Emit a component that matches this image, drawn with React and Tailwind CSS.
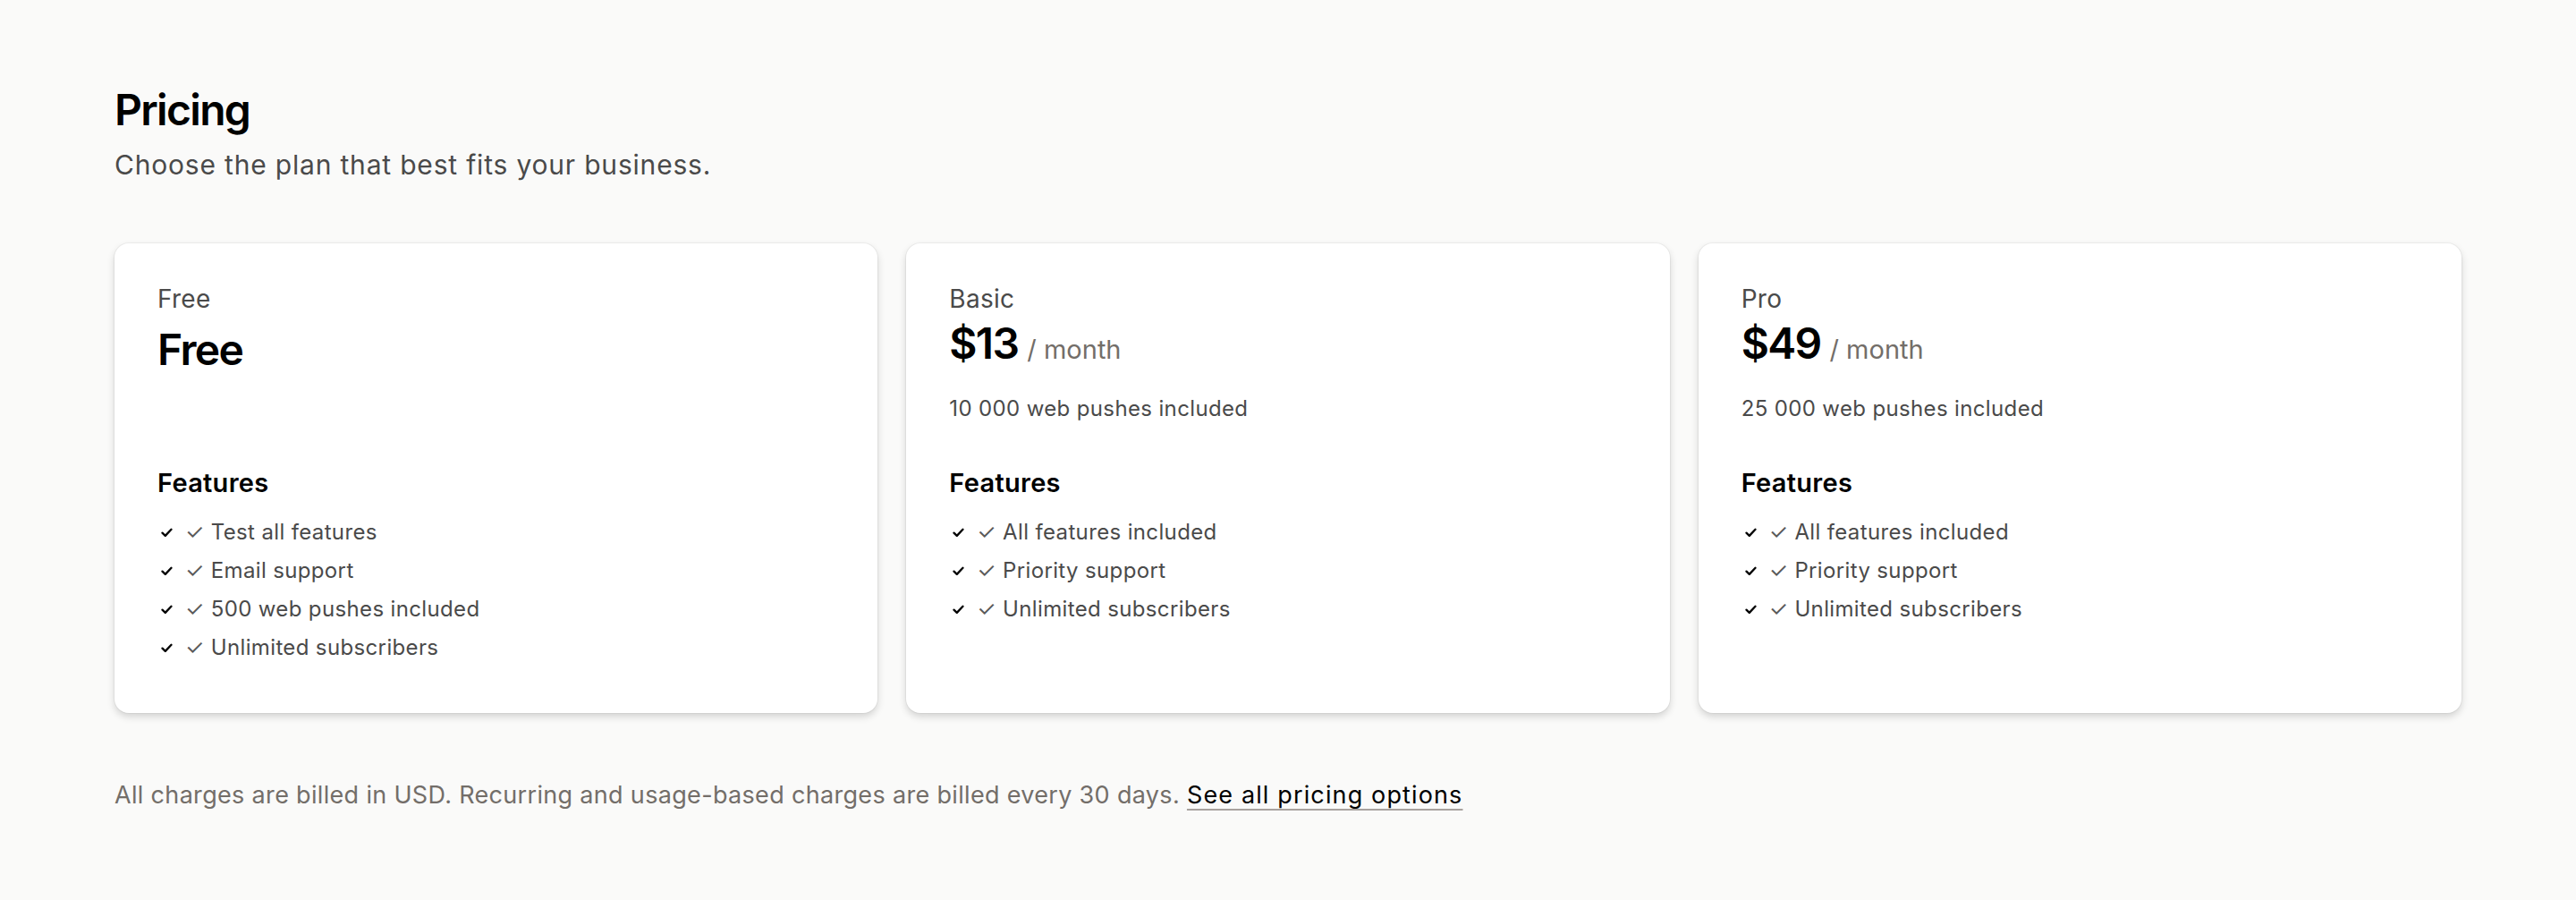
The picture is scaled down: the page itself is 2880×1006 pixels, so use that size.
import React from "react";

const plans = [
  { label: "Free", price: "Free", per: null, pushes: null, features: ["Test all features", "Email support", "500 web pushes included", "Unlimited subscribers"] },
  { label: "Basic", price: "$13", per: "/ month", pushes: "10 000 web pushes included", features: ["All features included", "Priority support", "Unlimited subscribers"] },
  { label: "Pro", price: "$49", per: "/ month", pushes: "25 000 web pushes included", features: ["All features included", "Priority support", "Unlimited subscribers"] },
];

function Check() {
  return (
    <svg width="13" height="11" viewBox="0 0 13 11" className="shrink-0" aria-hidden="true">
      <path d="M1.5 5.6 L4.8 8.9 L11.5 1.8" fill="none" stroke="#000" strokeWidth="2.3" strokeLinecap="round" strokeLinejoin="round" />
    </svg>
  );
}

function Card({ plan }) {
  return (
    <div className="bg-white rounded-[16px] shadow-[0_0_0_1px_rgba(0,0,0,0.04),0_4px_9px_rgba(0,0,0,0.16)] pt-12 px-12 pb-[55px] flex flex-col">
      <div className="text-[28px] leading-[28px] text-[#4a4a4a] tracking-[0.01em]">{plan.label}</div>
      {plan.per ? (
        <>
          <div className="mt-3 flex items-baseline gap-[10px]">
            <span className="text-[48px] leading-none font-semibold text-black tracking-[-0.035em]">{plan.price}</span>
            <span className="text-[29px] leading-none text-[#736e69]">{plan.per}</span>
          </div>
          <div className="h-[36px] mt-[31px] text-[24px] leading-[36px] text-[#4a4a4a] tracking-[0.015em]">{plan.pushes}</div>
        </>
      ) : (
        <>
          <div className="mt-[19px] flex items-baseline">
            <span className="text-[48px] leading-none font-semibold text-black tracking-[-0.035em]">{plan.price}</span>
          </div>
          <div className="h-[36px] mt-[24px]" />
        </>
      )}
      <div className="mt-[49px] text-[29px] leading-[32px] font-semibold text-black tracking-[0.01em]">Features</div>
      <ul className="mt-[21px] flex flex-col gap-[7px]">
        {plan.features.map((f) => (
          <li key={f} className="flex items-center h-[36px] text-[24px] leading-[36px] text-[#4a4a4a] tracking-[0.015em]">
            <span className="w-[31px] flex pl-[4px]"><Check /></span>
            <span><span className="text-[#5a5a5a]">✓</span> {f}</span>
          </li>
        ))}
      </ul>
    </div>
  );
}

export default function App() {
  return (
    <div className="min-h-[1006px] bg-[#fafaf9] px-[128px] pt-[99px] pb-10" style={{ fontFamily: "Inter, 'Noto Sans', sans-serif" }}>
      <h1 className="text-[48px] leading-none font-semibold text-black tracking-[-0.035em]">Pricing</h1>
      <p className="mt-[19px] text-[30px] leading-[36px] text-[#4a4a4a] tracking-[0.027em]">Choose the plan that best fits your business.</p>
      <div className="mt-[70px] grid grid-cols-3 gap-[32px]">
        {plans.map((p) => (
          <Card key={p.label} plan={p} />
        ))}
      </div>
      <p className="mt-[74px] text-[27px] leading-[36px] text-[#736e69] tracking-[0.012em]">
        All charges are billed in USD. Recurring and usage-based charges are billed every 30 days.{" "}
        <a href="#" className="text-black tracking-[0.042em] underline decoration-[#a8a29e] decoration-2 underline-offset-[6px]">See all pricing options</a>
      </p>
    </div>
  );
}
